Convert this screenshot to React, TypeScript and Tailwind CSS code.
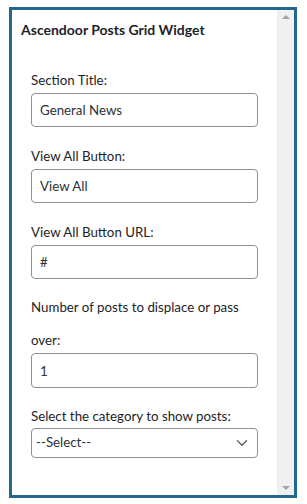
import { ChevronDown } from "lucide-react";

const font = { fontFamily: 'Lato, "Open Sans", Arial, sans-serif' };

function Field({ label, value, className = "" }: { label: string; value: string; className?: string }) {
  return (
    <div className={className}>
      <label className="block text-[13.3px] leading-[20px] text-[#1d2327]">{label}</label>
      <input
        readOnly
        value={value}
        className="mt-[3px] block h-[34px] w-[227px] rounded-[4px] border border-[#8c8f94] bg-white px-[8px] text-[13.3px] text-[#2c3338] outline-none"
      />
    </div>
  );
}

export default function App() {
  return (
    <div className="h-[504px] w-[307px] bg-white pl-[9px] pt-[7px]" style={font}>
      <div className="flex h-[491px] w-[288px] border-[3px] border-[#21698a] bg-white">
        <div className="flex-1 pl-[9px] pt-[10px]">
          <h3 className="text-[14px] font-bold leading-[20px] text-[#1d2327]">Ascendoor Posts Grid Widget</h3>

          <div className="pl-[10px]">
            <Field className="mt-[30px]" label="Section Title:" value="General News" />
            <Field className="mt-[19px]" label="View All Button:" value="View All" />
            <Field className="mt-[19px]" label="View All Button URL:" value="#" />

            <div className="mt-[12px]">
              <label className="-mb-[4px] block w-[227px] text-[13.3px] leading-[33px] text-[#1d2327]">
                Number of posts to displace or pass over:
              </label>
              <input
                readOnly
                value="1"
                className="block h-[35px] w-[227px] rounded-[4px] border border-[#8c8f94] bg-white px-[8px] text-[13.3px] text-[#2c3338] outline-none"
              />
            </div>

            <div className="mt-[18px]">
              <label className="block text-[13.3px] leading-[20px] text-[#1d2327]">Select the category to show posts:</label>
              <div className="mt-[2px] flex h-[30px] w-[227px] items-center justify-between rounded-[4px] border border-[#8c8f94] bg-white pl-[4px] pr-[6px] text-[13.3px] text-[#2c3338]">
                <span>--Select--</span>
                <ChevronDown size={18} strokeWidth={1.6} className="text-[#50575e]" />
              </div>
            </div>
          </div>
        </div>

        <div className="flex w-[17px] flex-col items-center justify-between bg-[#f0f0f0] py-[5px]">
          <div className="h-0 w-0 border-x-[4px] border-b-[4px] border-x-transparent border-b-[#a3a3a3]" />
          <div className="h-0 w-0 border-x-[4px] border-t-[4px] border-x-transparent border-t-[#a3a3a3]" />
        </div>
      </div>
    </div>
  );
}
